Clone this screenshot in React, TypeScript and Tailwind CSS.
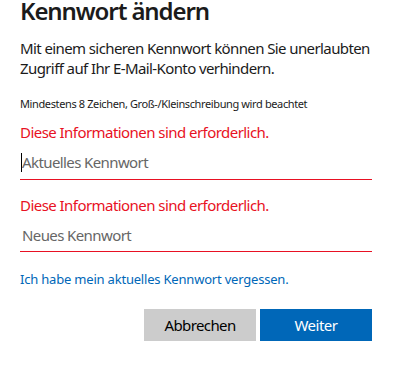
import React from "react";

export default function App() {
  const font = { fontFamily: '"Noto Sans", "Open Sans", sans-serif' };
  return (
    <div className="w-[399px] h-[368px] bg-white overflow-hidden" style={font}>
      <div className="pl-5 pr-[27px] text-[#1b1b1b]">
        <h1 className="text-[24px] leading-[20px] pt-px font-semibold tracking-[-1.1px] whitespace-nowrap">Kennwort ändern</h1>
        <p className="mt-[17px] text-[15px] leading-[20px] tracking-[-0.6px] whitespace-nowrap">
          Mit einem sicheren Kennwort können Sie unerlaubten
          <br />
          Zugriff auf Ihr E-Mail-Konto verhindern.
        </p>
        <p className="mt-[18px] text-[11px] leading-[16px] tracking-[-0.38px] whitespace-nowrap">
          Mindestens 8 Zeichen, Groß-/Kleinschreibung wird beachtet
        </p>
        <div className="mt-[10px] text-[15px] leading-[20px] text-[#e81123] tracking-[-0.55px]">
          Diese Informationen sind erforderlich.
        </div>
        <div className="flex items-center h-[34px] border-b border-[#e81123] mt-[4px]">
          <span className="w-px h-[19px] bg-black ml-px" />
          <span className="text-[15px] text-[#666666] tracking-[-0.6px]">Aktuelles Kennwort</span>
        </div>
        <div className="mt-[15px] text-[15px] leading-[20px] text-[#e81123] tracking-[-0.55px]">
          Diese Informationen sind erforderlich.
        </div>
        <div className="flex items-center h-[33px] border-b border-[#e81123] mt-[4px]">
          <span className="ml-[2px] text-[15px] text-[#666666] tracking-[-0.6px]">Neues Kennwort</span>
        </div>
        <div className="mt-[18px] text-[13px] leading-[18px] text-[#0067b8] tracking-[-0.2px]">
          Ich habe mein aktuelles Kennwort vergessen.
        </div>
        <div className="mt-[21px] flex justify-end gap-1">
          <button className="w-[112px] h-[32px] bg-[#cccccc] text-[15px] text-black tracking-[-0.6px]">Abbrechen</button>
          <button className="w-[112px] h-[32px] bg-[#0067b8] text-[15px] text-white tracking-[-0.5px]">Weiter</button>
        </div>
      </div>
    </div>
  );
}
